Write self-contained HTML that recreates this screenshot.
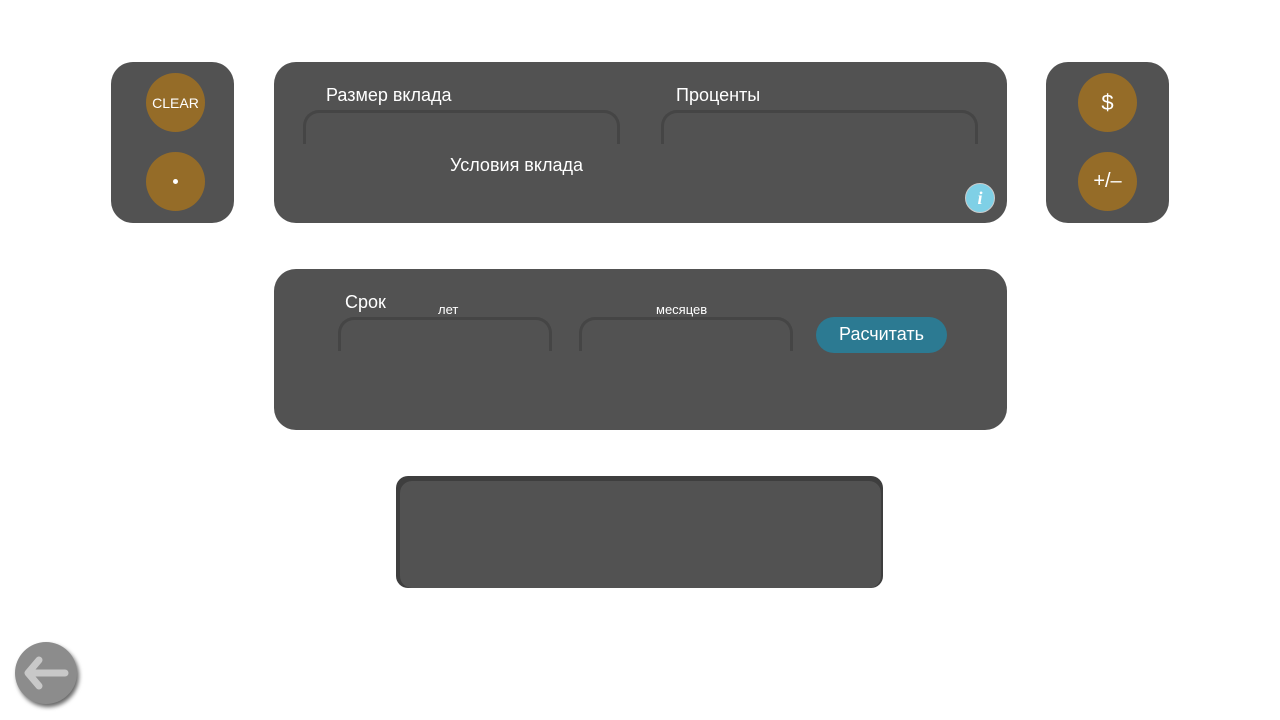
<!DOCTYPE html>
<html><head><meta charset="utf-8"><style>
body{margin:0;width:1280px;height:720px;background:#fff;position:relative;overflow:hidden;font-family:"Liberation Sans",sans-serif;color:#fff}
.p{position:absolute;background:#525252;border-radius:22px}
.c{position:absolute;width:59px;height:59px;border-radius:50%;background:#956c28;display:flex;align-items:center;justify-content:center;font-size:14px}
.t{position:absolute;font-size:18px;white-space:nowrap}
.f{position:absolute;height:34px;border:3px solid #454545;border-bottom:none;border-radius:16px 16px 0 0;box-sizing:border-box;background:#525252}
</style></head><body>
<div class="p" style="left:111px;top:62px;width:123px;height:161px"></div>
<div class="c" style="left:146px;top:73px;font-size:14px">CLEAR</div>
<div class="c" style="left:146px;top:152px"><span style="width:5px;height:5px;background:#fff;border-radius:50%"></span></div>
<div class="p" style="left:274px;top:62px;width:733px;height:161px"></div>
<div class="t" style="left:326px;top:85px">Размер вклада</div>
<div class="t" style="left:676px;top:85px">Проценты</div>
<div class="f" style="left:303px;top:110px;width:317px"></div>
<div class="f" style="left:661px;top:110px;width:317px"></div>
<div class="t" style="left:450px;top:155px">Условия вклада</div>
<div style="position:absolute;left:965px;top:183px;width:30px;height:30px;border-radius:50%;background:#7fd0e6;border:1px solid #ccc;box-sizing:border-box;text-align:center;font:italic bold 18px 'Liberation Serif',serif;line-height:28px">i</div>
<div class="p" style="left:1046px;top:62px;width:123px;height:161px"></div>
<div class="c" style="left:1078px;top:73px;font-size:22px">$</div>
<div class="c" style="left:1078px;top:152px;font-size:20px">+/–</div>
<div class="p" style="left:274px;top:269px;width:733px;height:161px"></div>
<div class="t" style="left:345px;top:292px">Срок</div>
<div class="t" style="left:438px;top:302px;font-size:13px">лет</div>
<div class="t" style="left:656px;top:302px;font-size:13px">месяцев</div>
<div class="f" style="left:338px;top:317px;width:214px"></div>
<div class="f" style="left:579px;top:317px;width:214px"></div>
<div style="position:absolute;left:816px;top:317px;width:131px;height:36px;border-radius:18px;background:#2c7a92;font-size:18px;text-align:center;line-height:34px">Расчитать</div>
<div class="p" style="left:396px;top:476px;width:487px;height:112px;border-radius:12px;background:#3e3e3e"></div>
<div class="p" style="left:400px;top:481px;width:481px;height:107px;border-radius:12px"></div>
<div style="position:absolute;left:15px;top:642px;width:62px;height:62px;border-radius:50%;background:#8c8c8c;box-shadow:2px 3px 4px rgba(0,0,0,.6)"></div>
<svg style="position:absolute;left:15px;top:642px" width="62" height="62"><path d="M50 31H14M24 18L13 31L24 44" stroke="#c8c8c8" stroke-width="7" fill="none" stroke-linecap="round" stroke-linejoin="round"/></svg>
</body></html>
